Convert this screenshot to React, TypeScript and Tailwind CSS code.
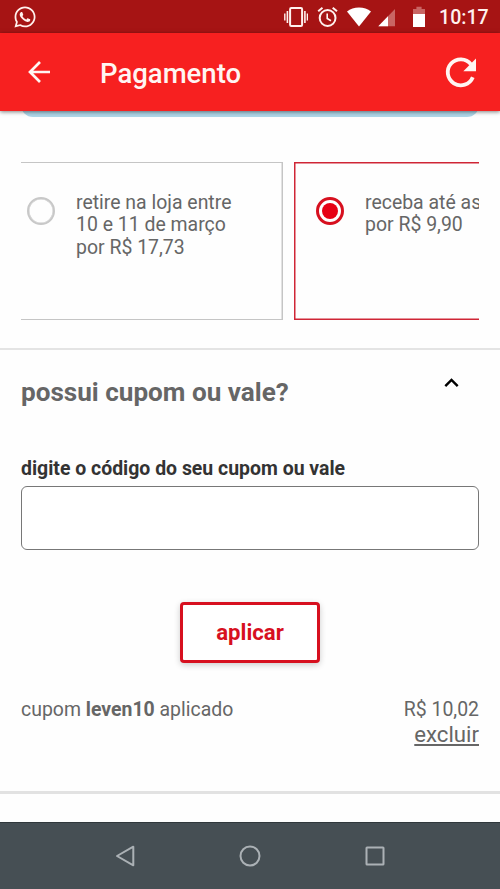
import { FaWhatsapp } from "react-icons/fa";

function StatusBar() {
  return (
    <div className="flex h-[33px] shrink-0 items-center bg-[#a61414] text-[#fff1ee]">
      <FaWhatsapp className="ml-[13px] size-[24px]" />
      <svg className="ml-[247px] h-[22px] w-[24px]" viewBox="0 0 24 22" fill="none" stroke="currentColor">
        <rect x="6.1" y="2.1" width="12" height="17.8" rx="1.2" strokeWidth="2" />
        <path d="M3.4 5v12M20.9 5v12" strokeWidth="1.6" />
        <path d="M.8 7.5v7M23.4 7.5v7" strokeWidth="1.4" />
      </svg>
      <svg className="ml-[9px] h-[22px] w-[22px]" viewBox="0 0 22 22" fill="none" stroke="currentColor">
        <circle cx="10.6" cy="12" r="7.9" strokeWidth="2" />
        <path d="M10.2 7.6v4.9l3.8 2.3" strokeWidth="1.6" />
        <path d="M1.2 5.3l4.3-3.6M20 5.3l-4.3-3.6" strokeWidth="2" />
      </svg>
      <svg className="ml-[8px] h-[22px] w-[24px]" viewBox="0 0 24 22" fill="#fff">
        <path d="M0 5.500C3.300 3 7.300 1.500 12 1.500S20.700 3 24 5.500L12 20.500Z" />
      </svg>
      <svg className="ml-[7px] h-[22px] w-[18px]" viewBox="0 0 18 22">
        <path d="M.3 20.300L17 3V20.300Z" fill="#c96563" />
        <path d="M.3 20.300L10 10.250V20.300Z" fill="#fff" />
      </svg>
      <svg className="ml-[17px] h-[22px] w-[12px]" viewBox="0 0 12 22">
        <path d="M0 3h3.400V.8h5.200V3H12v5H0Z" fill="#c96563" />
        <path d="M0 8h12v13H0Z" fill="#fff" />
      </svg>
      <span className="ml-[14px] mt-[3px] text-[19.600px] leading-none font-medium">10:17</span>
    </div>
  );
}

function Header() {
  return (
    <header className="z-10 flex h-[78px] shrink-0 items-center bg-[#f72020] text-[#fff5f2] shadow-[0_1px_4px_rgba(0,0,0,0.5)]">
      <svg className="ml-[28px] h-[22px] w-[23px]" viewBox="0 0 23 22" fill="none" stroke="currentColor" strokeWidth="2.700">
        <path d="M22 11H2M12 1L2 11l10 10" />
      </svg>
      <h1 className="ml-[49px] mt-[3px] flex-1 text-[27.500px] leading-none font-medium">Pagamento</h1>
      <svg className="mr-[23px] mt-px h-[32px] w-[32px]" viewBox="0 0 32 32" fill="none">
        <path d="M26 7.300A13 13 0 1 0 27.800 20.200" stroke="currentColor" strokeWidth="3.800" />
        <path d="M31 1.500v12.700H18.300Z" fill="currentColor" />
      </svg>
    </header>
  );
}

function DeliveryOptions() {
  return (
    <div className="ml-[21px] mt-[44.500px] flex h-[158.500px] w-[458px] shrink-0 gap-[11px] overflow-hidden text-[19.450px] leading-[22.700px] text-[#666]">
      <label className="flex w-[262px] shrink-0 border-y-[1.500px] border-r-[1.500px] border-[#c5c5c5] shadow-[inset_-0.5px_0_0_0_#c5c5c5]">
        <span className="ml-[6px] mt-[34.500px] size-[28px] shrink-0 rounded-full border-[2.500px] border-[#c8c8c8] shadow-[inset_0_0_0_0.5px_#c8c8c8]" />
        <span className="ml-[21px] mt-[29px]">
          retire na loja entre
          <br />
          10 e 11 de março
          <br />
          por R$ 17,73
        </span>
      </label>
      <label className="flex w-[262px] shrink-0 border border-[#cf2636] shadow-[inset_0_0_0_0.5px_#cf2636]">
        <span className="ml-[21px] mt-[34.500px] flex size-[28px] shrink-0 items-center justify-center rounded-full border-[3px] border-[#d7101f]">
          <span className="size-[16px] rounded-full bg-[#e60014]" />
        </span>
        <span className="ml-[21px] mt-[29px] whitespace-nowrap">
          receba até as
          <br />
          por R$ 9,90
        </span>
      </label>
    </div>
  );
}

function Coupon() {
  return (
    <section className="mt-[28px] flex shrink-0 flex-col border-t-2 border-[#e4e4e4] px-[21px] text-[#666]">
      <div className="mt-[25px] flex h-[34px] justify-between">
        <h2 className="text-[26.100px] leading-[34px] font-bold">possui cupom ou vale?</h2>
        <svg className="mr-[20px] mt-[3px] h-[10px] w-[15px]" viewBox="0 0 15 10" fill="none" stroke="#000" strokeWidth="2.400">
          <path d="M1.300 8.200L7.500 2l6.200 6.200" />
        </svg>
      </div>
      <label htmlFor="code" className="mt-[48px] text-[19.450px] leading-[24px] font-bold text-[#333]">
        digite o código do seu cupom ou vale
      </label>
      <input id="code" className="mt-[5px] h-[63.500px] rounded-[6px] border border-[#777] bg-white outline-none" />
      <button className="mt-[52.500px] h-[61px] w-[140px] self-center rounded-[4px] border-[3px] border-[#d7101f] bg-white text-[22.200px] font-bold text-[#d7101f] shadow-[0_2px_6px_rgba(0,0,0,0.2)]">
        aplicar
      </button>
      <div className="mt-[34px] flex justify-between text-[19.450px] leading-[25px]">
        <p>
          cupom <b>leven10</b> aplicado
        </p>
        <p className="flex flex-col items-end">
          R$ 10,02
          <a className="text-[22.200px] underline">excluir</a>
        </p>
      </div>
    </section>
  );
}

function NavigationBar() {
  return (
    <nav className="mt-auto flex h-[67px] shrink-0 items-center justify-between border-t border-[#30383c] bg-[#464f54] px-[113px]">
      <svg className="size-[24px]" viewBox="0 0 24 24" fill="none" stroke="#abb1b5" strokeWidth="2" strokeLinejoin="round">
        <path d="M20.300 2.700v18.600L4 12Z" />
      </svg>
      <svg className="size-[24px]" viewBox="0 0 24 24" fill="none" stroke="#abb1b5" strokeWidth="2">
        <circle cx="12" cy="12" r="9.500" />
      </svg>
      <svg className="size-[24px]" viewBox="0 0 24 24" fill="none" stroke="#abb1b5" strokeWidth="2">
        <rect x="3.500" y="3.500" width="17" height="17" rx=".5" />
      </svg>
    </nav>
  );
}

export default function App() {
  return (
    <main className="flex h-[889px] w-[500px] flex-col overflow-hidden bg-[#fefefe] font-[Roboto,sans-serif]">
      <StatusBar />
      <Header />
      <div className="mx-[21px] -mt-[14px] h-[20px] shrink-0 rounded-b-[12px] bg-[#afd6e8]" />
      <DeliveryOptions />
      <Coupon />
      <div className="mt-[44px] h-[3px] shrink-0 bg-[#e2e2e2]" />
      <NavigationBar />
    </main>
  );
}
